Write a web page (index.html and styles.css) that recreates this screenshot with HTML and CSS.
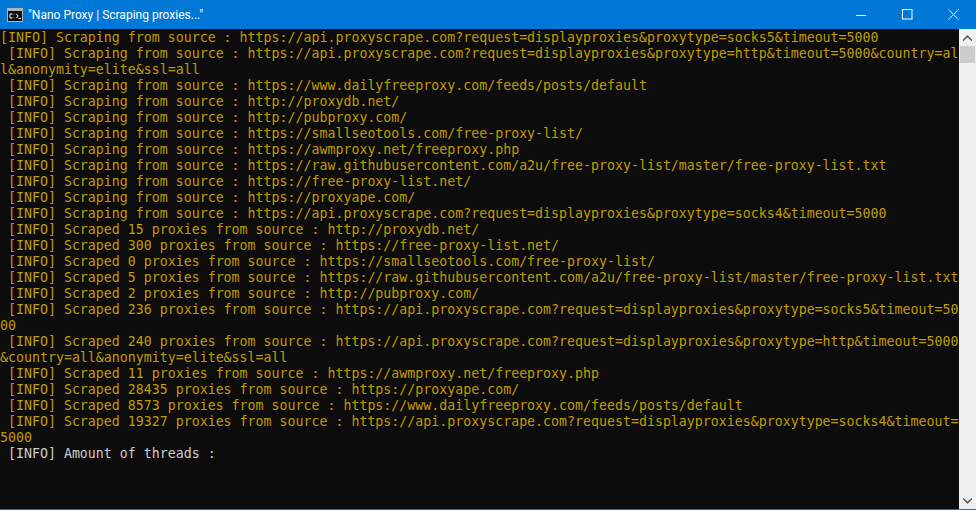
FILE: index.html
```html
<!DOCTYPE html>
<html lang="en">
<head>
<meta charset="utf-8">
<title>Nano Proxy</title>
<link rel="stylesheet" href="styles.css">
</head>
<body>
<div class="window">
  <header class="titlebar">
    <svg class="appicon" width="16" height="14" viewBox="0 0 16 14"><rect x="0.5" y="0.5" width="15" height="13" fill="#0c0c0c" stroke="#b4b4b4"/><rect x="1" y="1" width="14" height="2" fill="#b4b4b4"/><path d="M5.500 6H3V10H5.500M7 6.500V7M7 9V9.500M9.500 6L11 8L9.500 10M11.500 10.500H14" fill="none" stroke="#fff"/></svg>
    <span class="title">"Nano Proxy | Scraping proxies..."</span>
    <div class="controls">
      <div class="ctl"><svg width="11" height="11" viewBox="0 0 11 11"><path d="M0 6.5H10" stroke="#fff"/></svg></div>
      <div class="ctl"><svg width="11" height="11" viewBox="0 0 11 11"><rect x="0.5" y="0.5" width="9.500" height="9.500" fill="none" stroke="#fff"/></svg></div>
      <div class="ctl"><svg width="11" height="11" viewBox="0 0 11 11"><path d="M0.5 0.5L10.500 10.500M10.500 0.5L0.5 10.500" stroke="#fff"/></svg></div>
    </div>
  </header>
  <div class="body">
<pre class="console"><span class="o">[INFO] Scraping from source : https://api.proxyscrape.com?request=displayproxies&amp;proxytype=socks5&amp;timeout=5000
 [INFO] Scraping from source : https://api.proxyscrape.com?request=displayproxies&amp;proxytype=http&amp;timeout=5000&amp;country=al
l&amp;anonymity=elite&amp;ssl=all
 [INFO] Scraping from source : https://www.dailyfreeproxy.com/feeds/posts/default
 [INFO] Scraping from source : http://proxydb.net/
 [INFO] Scraping from source : http://pubproxy.com/
 [INFO] Scraping from source : https://smallseotools.com/free-proxy-list/
 [INFO] Scraping from source : https://awmproxy.net/freeproxy.php
 [INFO] Scraping from source : https://raw.githubusercontent.com/a2u/free-proxy-list/master/free-proxy-list.txt
 [INFO] Scraping from source : https://free-proxy-list.net/
 [INFO] Scraping from source : https://proxyape.com/
 [INFO] Scraping from source : https://api.proxyscrape.com?request=displayproxies&amp;proxytype=socks4&amp;timeout=5000
 [INFO] Scraped 15 proxies from source : http://proxydb.net/
 [INFO] Scraped 300 proxies from source : https://free-proxy-list.net/
 [INFO] Scraped 0 proxies from source : https://smallseotools.com/free-proxy-list/
 [INFO] Scraped 5 proxies from source : https://raw.githubusercontent.com/a2u/free-proxy-list/master/free-proxy-list.txt
 [INFO] Scraped 2 proxies from source : http://pubproxy.com/
 [INFO] Scraped 236 proxies from source : https://api.proxyscrape.com?request=displayproxies&amp;proxytype=socks5&amp;timeout=50
00
 [INFO] Scraped 240 proxies from source : https://api.proxyscrape.com?request=displayproxies&amp;proxytype=http&amp;timeout=5000
&amp;country=all&amp;anonymity=elite&amp;ssl=all
 [INFO] Scraped 11 proxies from source : https://awmproxy.net/freeproxy.php
 [INFO] Scraped 28435 proxies from source : https://proxyape.com/
 [INFO] Scraped 8573 proxies from source : https://www.dailyfreeproxy.com/feeds/posts/default
 [INFO] Scraped 19327 proxies from source : https://api.proxyscrape.com?request=displayproxies&amp;proxytype=socks4&amp;timeout=
5000</span>
<span class="w"> [INFO] Amount of threads :</span></pre>
    <div class="scrollbar">
      <div class="arrow"><svg width="9" height="6" viewBox="0 0 9 6"><path d="M0 4.500L4.500 0L9 4.500V6.500L4.500 2.500L0 6.500Z" fill="#606060"/></svg></div>
      <div class="track"><div class="thumb"></div></div>
      <div class="arrow"><svg width="9" height="6" viewBox="0 0 9 6"><path d="M0 1.500L4.500 6L9 1.500V-0.500L4.500 3.500L0 -0.500Z" fill="#606060"/></svg></div>
    </div>
  </div>
</div>
</body>
</html>
```
FILE: styles.css
```css
html, body { margin: 0; padding: 0; background: #0c0c0c; overflow: hidden; }
.window { width: 976px; height: 510px; display: flex; flex-direction: column; }
.titlebar { height: 29px; flex: none; background: #0078d7; display: flex; align-items: center; padding-left: 7px; color: #fff; font: 12px Roboto, "Noto Sans", sans-serif; }
.appicon { flex: none; margin-right: 5px; }
.title { flex: 1; }
.controls { display: flex; height: 100%; }
.ctl { width: 46px; display: flex; align-items: center; justify-content: center; }
.body { flex: 1; display: flex; min-height: 0; border-bottom: 1px solid #0078d7; }
.console { flex: 1; min-width: 0; margin: 0; padding-top: 1px; color: #c19c00; font: 13.28px/16px "DejaVu Sans Mono", monospace; white-space: pre; }
.w { color: #cccccc; }
.scrollbar { width: 17px; flex: none; background: #f0f0f0; display: flex; flex-direction: column; }
.arrow { height: 17px; display: flex; align-items: center; justify-content: center; flex: none; }
.track { flex: 1; padding: 0 1px; }
.thumb { height: 17px; background: #cdcdcd; }
```
